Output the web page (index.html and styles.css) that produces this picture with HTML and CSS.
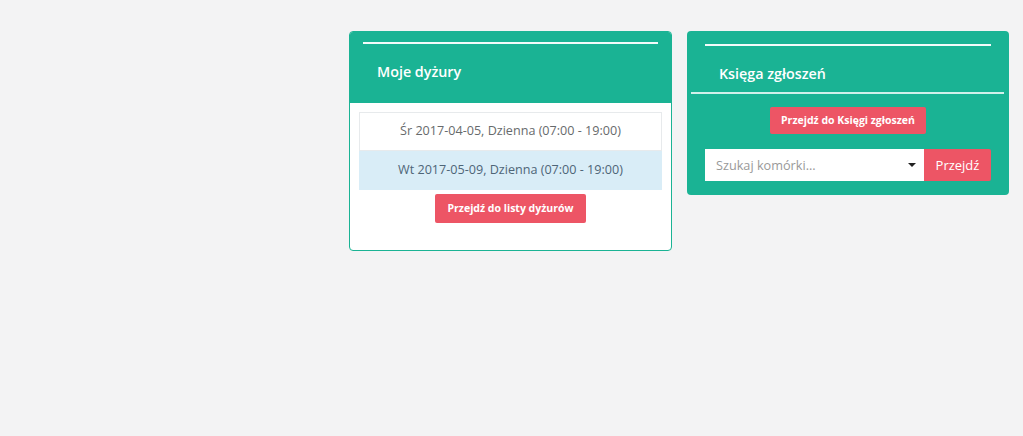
FILE: index.html
```html
<!DOCTYPE html>
<html lang="pl">
<head>
<meta charset="utf-8">
<link rel="stylesheet" href="styles.css">
</head>
<body>
<div class="row">
  <div class="panel panel-duty">
    <div class="duty-head">
      <div class="rule"></div>
      <h3 class="title">Moje dyżury</h3>
    </div>
    <div class="duty-body">
      <ul class="list">
        <li class="item">Śr 2017-04-05, Dzienna (07:00 - 19:00)</li>
        <li class="item item-info">Wt 2017-05-09, Dzienna (07:00 - 19:00)</li>
      </ul>
      <div class="center"><a class="btn btn-small">Przejdź do listy dyżurów</a></div>
    </div>
  </div>
  <div class="panel panel-book">
    <div class="rule rule-book"></div>
    <h3 class="title title-book">Księga zgłoszeń</h3>
    <div class="rule rule-wide"></div>
    <div class="center"><a class="btn btn-small btn-book">Przejdź do Księgi zgłoszeń</a></div>
    <div class="search">
      <div class="select">
        <span class="placeholder">Szukaj komórki...</span>
        <span class="caret"></span>
      </div>
      <a class="btn btn-go">Przejdź</a>
    </div>
  </div>
</div>
</body>
</html>
```

FILE: styles.css
```css
html, body {
  margin: 0;
  padding: 0;
  background: #f3f3f4;
  font-family: "Open Sans", "Liberation Sans", sans-serif;
  color: #676a6c;
}

.row {
  display: flex;
  align-items: flex-start;
  gap: 15px;
  padding: 31px 14px 0 349px;
}

.panel {
  box-sizing: border-box;
  border-radius: 4px;
}

.panel-duty {
  width: 323px;
  height: 220px;
  background: #fff;
  border: 1px solid #1ab394;
  overflow: hidden;
}

.duty-head {
  background: #1ab394;
  padding: 10px 13px 0 13px;
  height: 71px;
  box-sizing: border-box;
}

.rule {
  height: 2px;
  background: #ffffff;
  opacity: 0.95;
}

.title {
  margin: 0;
  color: #fff;
  font-size: 14.3px;
  font-weight: 600;
  line-height: 20px;
  padding: 18px 0 0 14px;
}

.duty-body {
  padding: 9px 9px 0 9px;
}

.list {
  list-style: none;
  margin: 0;
  padding: 0;
}

.item {
  font-size: 12.6px;
  line-height: 18px;
  text-align: center;
  padding: 9px 10px 10px;
  border: 1px solid #e7eaec;
  background: #fff;
  color: #676a6c;
}

.item-info {
  background: #d9edf7;
  border-color: #d9edf7;
  border-top: 0;
  padding-top: 10px;
  color: #4e6577;
}

.center {
  display: flex;
  justify-content: center;
}

.btn {
  background: #ed5565;
  color: #fff;
  text-decoration: none;
  border-radius: 2px;
  display: inline-block;
  box-sizing: border-box;
}

.btn-small {
  margin-top: 4px;
  height: 29px;
  line-height: 29px;
  padding: 0 12px;
  font-size: 10.5px;
  font-weight: 700;
}

.panel-book {
  width: 322px;
  height: 164px;
  background: #1ab394;
  padding: 13px 18px 0 18px;
}

.rule-book {
  height: 2px;
}

.title-book {
  padding: 18px 0 0 14px;
}

.rule-wide {
  margin: 8px -13px 0 -14px;
  height: 2px;
  opacity: 0.8;
}

.btn-book {
  margin-top: 13px;
  height: 27px;
  line-height: 27px;
  padding: 0 11px;
}

.search {
  display: flex;
  margin-top: 15px;
  height: 32px;
}

.select {
  flex: 1;
  background: #fff;
  display: flex;
  align-items: center;
  padding: 0 8px 0 11px;
}

.placeholder {
  flex: 1;
  font-size: 12.7px;
  color: #999;
}

.caret {
  width: 0;
  height: 0;
  border-left: 4px solid transparent;
  border-right: 4px solid transparent;
  border-top: 4px solid #222;
}

.btn-go {
  width: 67px;
  text-align: center;
  font-size: 13px;
  line-height: 32px;
  border-radius: 0 2px 2px 0;
}
```
